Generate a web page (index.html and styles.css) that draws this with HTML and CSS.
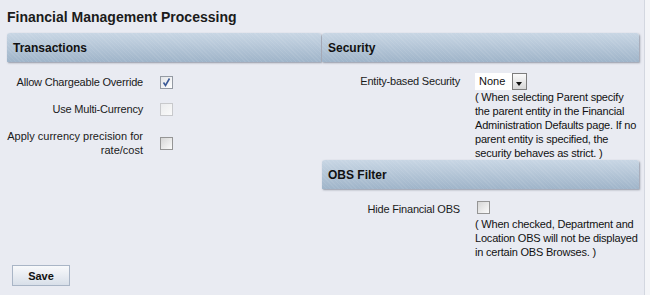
FILE: index.html
```html
<!DOCTYPE html>
<html lang="en">

<head>
    <meta charset="UTF-8">
    <meta name="viewport" content="width=device-width, initial-scale=1.0">
    <title>Financial Management Processing</title>
    <link rel="stylesheet" href="styles.css">
</head>

<body>
    <div class="page">
        <h1>Financial Management Processing</h1>

        <div class="columns">
            <div class="column">
                <div class="section-head">Transactions</div>
                <div class="section-body section-body--left">
                    <div class="field">
                        <label class="field-label">Allow Chargeable Override</label>
                        <span class="check check--on">
                            <svg width="11" height="11" viewBox="0 0 11 11">
                                <path d="M2.5 5.5 L4.5 8.5 L8.5 1.5" fill="none" stroke="#3b5a97" stroke-width="1.6" />
                            </svg>
                        </span>
                    </div>
                    <div class="field">
                        <label class="field-label">Use Multi-Currency</label>
                        <span class="check check--disabled"></span>
                    </div>
                    <div class="field">
                        <label class="field-label field-label--wide">Apply currency precision for rate/cost</label>
                        <span class="check"></span>
                    </div>
                </div>
            </div>

            <div class="column">
                <div class="section-head">Security</div>
                <div class="section-body section-body--security">
                    <div class="field field--right">
                        <label class="field-label">Entity-based Security</label>
                        <div>
                            <div class="select">
                                <span class="select-value">None</span>
                                <span class="select-btn"></span>
                            </div>
                            <p class="hint">( When selecting Parent specify<br>the parent entity in the Financial<br>Administration Defaults page. If no<br>parent entity is specified, the<br>security behaves as strict. )</p>
                        </div>
                    </div>
                </div>

                <div class="section-head">OBS Filter</div>
                <div class="section-body section-body--obs">
                    <div class="field field--right">
                        <label class="field-label">Hide Financial OBS</label>
                        <div>
                            <span class="check check--obs"></span>
                            <p class="hint hint--gap">( When checked, Department and<br>Location OBS will not be displayed<br>in certain OBS Browses. )</p>
                        </div>
                    </div>
                </div>
            </div>
        </div>

        <button class="save-btn">Save</button>
    </div>
</body>

</html>
```

FILE: styles.css
```css
/* Financial management settings page */
body {
    margin: 0;
    background-color: #f4f5f8;
    color: #111;
    font-family: "Liberation Sans", Arial, sans-serif;
}

.page {
    width: 645px;
    height: 295px;
    box-sizing: border-box;
    background-color: #e9ebf2;
    border-right: 1px solid #d3d7e0;
    overflow: hidden;
}

h1 {
    margin: 0;
    padding: 8px 0 0 7px;
    font-size: 14px;
    line-height: 18px;
    font-weight: bold;
    color: #1b1b1b;
}

.columns {
    display: grid;
    grid-template-columns: 314px 317px;
    column-gap: 1px;
    margin: 7px 0 0 7px;
}

.section-head {
    height: 29px;
    box-sizing: border-box;
    padding: 2px 0 0 6px;
    line-height: 27px;
    font-size: 12px;
    font-weight: bold;
    color: #111;
    border-radius: 3px 3px 0 0;
    background:
        repeating-linear-gradient(45deg, rgba(255, 255, 255, 0.07) 0 1px, transparent 1px 3px),
        linear-gradient(#c8d6e4, #9fb4c9);
    box-shadow: 1px 1px 2px rgba(60, 70, 90, 0.5);
}

.section-body--left {
    display: flex;
    flex-direction: column;
    gap: 13px;
    padding-top: 13px;
}

.section-body--security {
    padding-top: 11px;
}

.section-body--obs {
    padding-top: 12px;
}

.field {
    display: grid;
    grid-template-columns: 136px auto;
    column-gap: 17px;
    align-items: center;
    justify-content: start;
}

.field--right {
    grid-template-columns: 138px auto;
    column-gap: 15px;
    align-items: start;
}

.field-label {
    text-align: right;
    font-size: 11px;
    line-height: 14px;
    letter-spacing: -0.2px;
    color: #1a1a1a;
}

.field-label--wide {
    letter-spacing: 0;
    margin-left: -1px;
}

.field--right .field-label {
    padding-top: 1px;
}

.check {
    display: block;
    width: 13px;
    height: 13px;
    box-sizing: border-box;
    border: 1px solid #959595;
    background: linear-gradient(135deg, #d6d6d6, #fbfbfb);
}

.check--on {
    border-color: #949aa3;
    background: linear-gradient(135deg, #e2e4e8, #ffffff);
}

.check--on svg {
    display: block;
}

.check--disabled {
    border-color: #c8c9cc;
    background: linear-gradient(135deg, #ebecee, #fafafa);
}

.check--obs {
    margin-left: 2px;
}

.select {
    display: flex;
    height: 17px;
}

.select-value {
    width: 33px;
    padding-left: 4px;
    background-color: #fff;
    font-size: 11px;
    line-height: 17px;
}

.select-btn {
    position: relative;
    width: 15px;
    height: 17px;
    box-sizing: border-box;
    border: 1px solid #7d7d7d;
    background: linear-gradient(#fbfbfb, #d6d6d6);
}

.select-btn::after {
    content: "";
    position: absolute;
    left: 3px;
    top: 8px;
    border-left: 3.5px solid transparent;
    border-right: 3.5px solid transparent;
    border-top: 4px solid #111;
}

.hint {
    margin: 0;
    font-size: 11px;
    line-height: 14px;
    letter-spacing: -0.2px;
    white-space: nowrap;
    color: #111;
}

.hint--gap {
    margin-top: 3px;
}

.save-btn {
    display: block;
    margin: 6px 0 0 12px;
    width: 58px;
    height: 21px;
    padding: 0;
    font-family: "Liberation Sans", Arial, sans-serif;
    font-size: 11px;
    font-weight: bold;
    color: #111;
    border: 1px solid #a9b5c6;
    background: linear-gradient(#f8f9fb, #d8dfe9);
    cursor: pointer;
}
```
